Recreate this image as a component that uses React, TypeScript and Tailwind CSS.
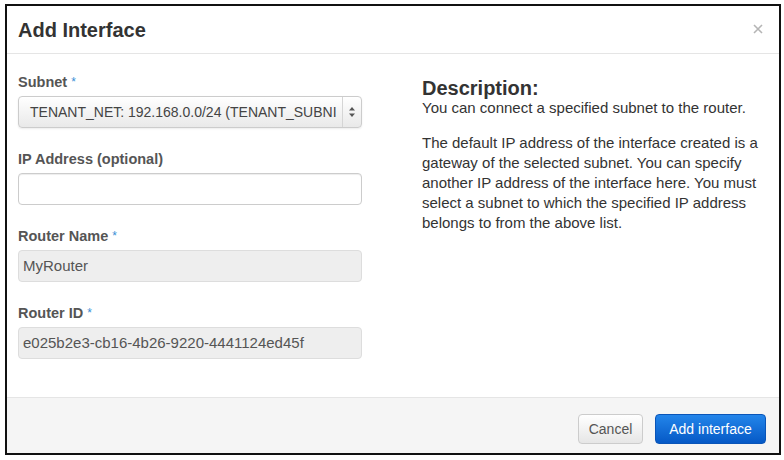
import React from "react";

const font = { fontFamily: '"Liberation Sans", Arial, sans-serif' };

interface FieldProps {
  label: string;
  required?: boolean;
  children: React.ReactNode;
}

const Field: React.FC<FieldProps> = ({ label, required, children }) => (
  <div className="mb-[22px]">
    <label className="block text-[14.5px] leading-[18px] font-bold text-[#555] mb-[5px]">
      {label}
      {required && <span className="text-[#3a8fd6] font-normal ml-[4px] text-[12px] align-top">*</span>}
    </label>
    {children}
  </div>
);

const SelectArrows = () => (
  <svg width="8" height="12" viewBox="0 0 8 12">
    <path d="M4 1 L7 4.5 H1 Z" fill="#555" />
    <path d="M4 11 L7 7.5 H1 Z" fill="#555" />
  </svg>
);

const App: React.FC = () => {
  return (
    <div className="w-[784px] h-[460px] bg-white pt-[4px] pl-[5px]" style={font}>
      <div className="w-[776px] h-[451px] border-2 border-[#111] flex flex-col bg-white">
        {/* header */}
        <div className="h-[48px] border-b border-[#e5e5e5] flex items-center justify-between pl-[11px] pr-[16px]">
          <h3 className="text-[20px] font-bold text-[#333]">Add Interface</h3>
          <svg width="10" height="10" viewBox="0 0 10 10" className="mt-[-2px]">
            <path d="M1 1 L9 9 M9 1 L1 9" stroke="#b5b5b5" strokeWidth="1.6" />
          </svg>
        </div>

        {/* body */}
        <div className="flex-1 flex pl-[11px]">
          <div className="w-[344px] pt-[19px]">
            <Field label="Subnet" required>
              <div className="h-[32px] flex items-center border border-[#ccc] rounded-[4px] bg-gradient-to-b from-white to-[#e9e9e9] shadow-[inset_0_1px_0_#fff,0_1px_2px_rgba(0,0,0,0.08)]">
                <span className="flex-1 pl-[11px] text-[14px] text-[#444] whitespace-nowrap overflow-hidden">
                  TENANT_NET: 192.168.0.0/24 (TENANT_SUBNI
                </span>
                <span className="w-[19px] h-full border-l border-[#d5d5d5] flex items-center justify-center">
                  <SelectArrows />
                </span>
              </div>
            </Field>
            <Field label="IP Address (optional)">
              <div className="h-[32px] border border-[#ccc] rounded-[4px] bg-white shadow-[inset_0_1px_1px_rgba(0,0,0,0.075)]" />
            </Field>
            <Field label="Router Name" required>
              <div className="h-[32px] flex items-center px-[4px] border border-[#ddd] rounded-[4px] bg-[#eee] text-[15px] text-[#555]">
                MyRouter
              </div>
            </Field>
            <Field label="Router ID" required>
              <div className="h-[32px] flex items-center px-[4px] border border-[#ddd] rounded-[4px] bg-[#eee] text-[15px] text-[#555]">
                e025b2e3-cb16-4b26-9220-4441124ed45f
              </div>
            </Field>
          </div>

          <div className="ml-[60px] pt-[24px] text-[#333]">
            <h4 className="text-[20px] leading-[20px] font-bold text-[#333]">Description:</h4>
            <p className="text-[15px] leading-[20px] mb-[15px]">
              You can connect a specified subnet to the router.
            </p>
            <p className="text-[15px] leading-[20px]">
              The default IP address of the interface created is a<br />
              gateway of the selected subnet. You can specify<br />
              another IP address of the interface here. You must<br />
              select a subnet to which the specified IP address<br />
              belongs to from the above list.
            </p>
          </div>
        </div>

        {/* footer */}
        <div className="h-[56px] border-t border-[#e5e5e5] bg-[#f5f5f5] flex justify-end items-start pt-[16px] pr-[13px] gap-[12px]">
          <button className="h-[30px] w-[65px] border border-[#ccc] rounded-[4px] bg-gradient-to-b from-white to-[#e6e6e6] text-[14px] text-[#555]">
            Cancel
          </button>
          <button className="h-[30px] w-[111px] border border-[#0a55b8] rounded-[4px] bg-gradient-to-b from-[#2385ea] to-[#0659c6] text-[14px] text-white">
            Add interface
          </button>
        </div>
      </div>
    </div>
  );
};

export default App;
